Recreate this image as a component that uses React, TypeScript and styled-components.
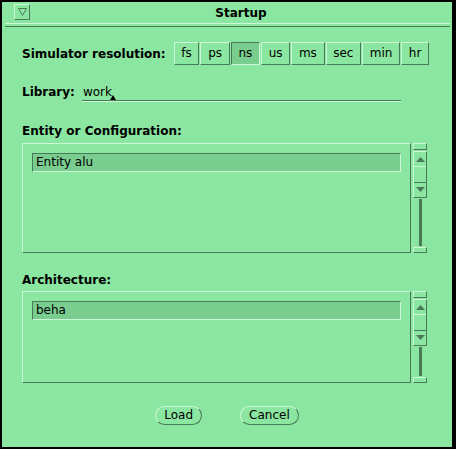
import styled, { createGlobalStyle } from 'styled-components';

const BG = '#8ae6a0';
const SEL = '#78cd8f';
const DARK = '#487a57';
const LIGHT = '#cdf8d6';

const GlobalStyle = createGlobalStyle`
  html, body {
    margin: 0;
    padding: 0;
    background: #000;
  }
  body {
    font-family: "DejaVu Sans", "Liberation Sans", sans-serif;
    font-size: 12px;
    color: #000;
  }
`;

const units = ['fs', 'ps', 'ns', 'us', 'ms', 'sec', 'min', 'hr'];

const UpArrow = () => (
  <svg width="9" height="5" viewBox="0 0 9 5">
    <polygon points="4.5,0 9,5 0,5" fill={DARK} />
  </svg>
);

const DownArrow = () => (
  <svg width="9" height="5" viewBox="0 0 9 5">
    <polygon points="0,0 9,0 4.5,5" fill={DARK} />
  </svg>
);

const ScrollBar: React.FC = () => (
  <Scroll>
    <ScrollCap $h={7} />
    <Elevator>
      <ElevatorPart>
        <UpArrow />
      </ElevatorPart>
      <ElevatorPart $middle />
      <ElevatorPart>
        <DownArrow />
      </ElevatorPart>
    </Elevator>
    <Trough />
    <ScrollCap $h={6} />
  </Scroll>
);

const Startup: React.FC = () => {
  return (
    <Window>
      <GlobalStyle />
      <TitleBar>
        <MenuButton>
          <svg width="9" height="8" viewBox="0 0 9 8">
            <polygon points="0.5,0.5 8.5,0.5 4.5,7.5" fill="none" stroke={DARK} strokeWidth="1" />
          </svg>
        </MenuButton>
        <Title>Startup</Title>
      </TitleBar>
      <TitleRule />

      <Content>
        <ResolutionRow>
          <FieldLabel>Simulator resolution:</FieldLabel>
          <UnitGroup>
            {units.map((u) => (
              <UnitButton key={u} $pressed={u === 'ns'}>
                {u}
              </UnitButton>
            ))}
          </UnitGroup>
        </ResolutionRow>

        <LibraryRow>
          <LibLabel>Library:</LibLabel>
          <LibField>
            work
            <Caret />
          </LibField>
        </LibraryRow>

        <SectionLabel $top={23}>Entity or Configuration:</SectionLabel>
        <ListArea $top={4} $height={110}>
          <ListBox>
            <ListRow>Entity alu</ListRow>
          </ListBox>
          <ScrollBar />
        </ListArea>

        <SectionLabel $top={20}>Architecture:</SectionLabel>
        <ListArea $top={3} $height={92}>
          <ListBox>
            <ListRow>beha</ListRow>
          </ListBox>
          <ScrollBar />
        </ListArea>

        <ButtonRow>
          <PillButton>Load</PillButton>
          <PillButton>Cancel</PillButton>
        </ButtonRow>
      </Content>
    </Window>
  );
};

const Window = styled.div`
  width: 456px;
  height: 449px;
  box-sizing: border-box;
  border-style: solid;
  border-color: #000;
  border-width: 2px 4px 2px 2px;
  background: ${BG};
  display: flex;
  flex-direction: column;
`;

const TitleBar = styled.div`
  display: flex;
  align-items: flex-start;
  height: 21px;
  padding-left: 12px;
`;

const MenuButton = styled.div`
  width: 16px;
  height: 16px;
  margin-top: 2px;
  box-sizing: border-box;
  border: 1px solid;
  border-color: ${LIGHT} ${DARK} ${DARK} ${LIGHT};
  display: flex;
  align-items: center;
  justify-content: center;
`;

const Title = styled.div`
  flex: 1;
  text-align: center;
  font-weight: bold;
  line-height: 22px;
`;

const TitleRule = styled.div`
  height: 2px;
  margin: 0 2px 0 3px;
  border-top: 1px solid ${LIGHT};
  border-bottom: 1px solid ${DARK};
`;

const Content = styled.div`
  display: flex;
  flex-direction: column;
  padding: 0 22px 0 20px;
`;

const ResolutionRow = styled.div`
  display: flex;
  align-items: center;
  height: 23px;
  margin-top: 15px;
`;

const FieldLabel = styled.span`
  font-weight: bold;
  white-space: nowrap;
  margin-right: 8px;
`;

const UnitGroup = styled.div`
  display: flex;
  gap: 1px;
`;

const UnitButton = styled.div<{ $pressed?: boolean }>`
  height: 23px;
  box-sizing: border-box;
  padding: 0 6.7px;
  line-height: 21px;
  border: 1px solid;
  border-color: ${(p) =>
    p.$pressed ? `${DARK} ${LIGHT} ${LIGHT} ${DARK}` : `${LIGHT} ${DARK} ${DARK} ${LIGHT}`};
  background: ${(p) => (p.$pressed ? SEL : BG)};
`;

const LibraryRow = styled.div`
  display: flex;
  height: 16px;
  margin-top: 20px;
`;

const LibLabel = styled.span`
  font-weight: bold;
  line-height: 15px;
  margin-right: 7px;
`;

const LibField = styled.div`
  position: relative;
  flex: 1;
  margin-right: 29px;
  height: 15px;
  line-height: 15px;
  padding-left: 1px;
  border-bottom: 1px solid ${DARK};
  box-shadow: 0 1px 0 ${LIGHT};
`;

const Caret = styled.span`
  position: absolute;
  left: 28px;
  top: 10px;
  width: 0;
  height: 0;
  border-left: 3px solid transparent;
  border-right: 3px solid transparent;
  border-bottom: 5px solid #000;
`;

const SectionLabel = styled.div<{ $top: number }>`
  font-weight: bold;
  line-height: 15px;
  margin-top: ${(p) => p.$top}px;
`;

const ListArea = styled.div<{ $top: number; $height: number }>`
  display: flex;
  gap: 2px;
  height: ${(p) => p.$height}px;
  margin-top: ${(p) => p.$top}px;
  padding-right: 3px;
`;

const ListBox = styled.div`
  flex: 1;
  box-sizing: border-box;
  border: 1px solid;
  border-color: ${LIGHT} ${DARK} ${DARK} ${LIGHT};
  padding: 9px 9px 0 9px;
`;

const ListRow = styled.div`
  height: 19px;
  box-sizing: border-box;
  border: 1px solid;
  border-color: ${DARK} ${LIGHT} ${LIGHT} ${DARK};
  background: ${SEL};
  padding-left: 3px;
  line-height: 17px;
`;

const Scroll = styled.div`
  width: 14px;
  display: flex;
  flex-direction: column;
`;

const ScrollCap = styled.div<{ $h: number }>`
  height: ${(p) => p.$h}px;
  box-sizing: border-box;
  border: 1px solid;
  border-color: ${LIGHT} ${DARK} ${DARK} ${LIGHT};
`;

const Elevator = styled.div`
  height: 47px;
  margin: 1px 0;
  box-sizing: border-box;
  border: 1px solid;
  border-color: ${LIGHT} ${DARK} ${DARK} ${LIGHT};
  display: flex;
  flex-direction: column;
`;

const ElevatorPart = styled.div<{ $middle?: boolean }>`
  flex: 1;
  display: flex;
  align-items: center;
  justify-content: center;
  border-top: ${(p) => (p.$middle ? `1px solid ${LIGHT}` : 'none')};
  border-bottom: ${(p) => (p.$middle ? `1px solid ${DARK}` : 'none')};
`;

const Trough = styled.div`
  flex: 1;
  width: 3px;
  align-self: center;
  background: ${DARK};
  margin-bottom: 1px;
`;

const ButtonRow = styled.div`
  display: flex;
  justify-content: center;
  gap: 38px;
  margin-top: 23px;
  padding-left: 2px;
`;

const PillButton = styled.div`
  height: 19px;
  box-sizing: border-box;
  padding: 0 8px;
  line-height: 17px;
  border-radius: 10px;
  border: 1px solid;
  border-color: ${LIGHT} ${DARK} ${DARK} ${LIGHT};
  background: ${BG};
`;

export default Startup;
